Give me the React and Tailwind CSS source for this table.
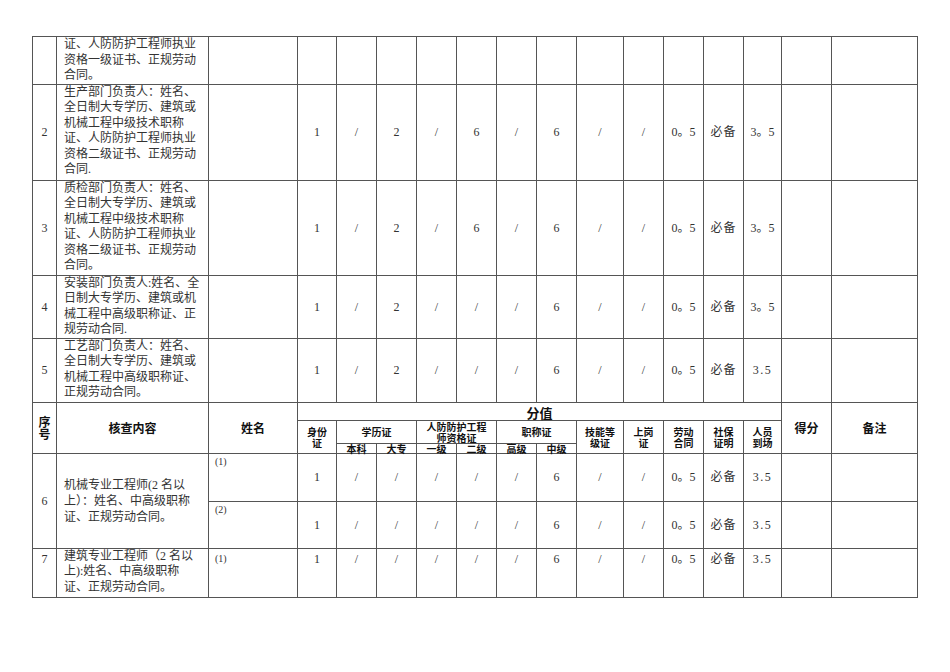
import React from "react";

const FONT = { fontFamily: '"Liberation Serif", "Noto Sans CJK SC", serif' };
const HFONT = { fontFamily: '"Noto Sans CJK SC", sans-serif' };

const rows = [
  { seq: "", lines: ["证、人防防护工程师执业", "资格一级证书、正规劳动", "合同。"], h: "h-[47px]", vals: null },
  {
    seq: "2",
    lines: ["生产部门负责人：姓名、", "全日制大专学历、建筑或", "机械工程中级技术职称", "证、人防防护工程师执业", "资格二级证书、正规劳动", "合同."],
    h: "h-[96px]",
    vals: ["1", "/", "2", "/", "6", "/", "6", "/", "/", "0。5", "必备", "3。5"],
  },
  {
    seq: "3",
    lines: ["质检部门负责人：姓名、", "全日制大专学历、建筑或", "机械工程中级技术职称", "证、人防防护工程师执业", "资格二级证书、正规劳动", "合同。"],
    h: "h-[95px]",
    vals: ["1", "/", "2", "/", "6", "/", "6", "/", "/", "0。5", "必备", "3。5"],
  },
  {
    seq: "4",
    lines: ["安装部门负责人:姓名、全", "日制大专学历、建筑或机", "械工程中高级职称证、正", "规劳动合同."],
    h: "h-[63px]",
    vals: ["1", "/", "2", "/", "/", "/", "6", "/", "/", "0。5", "必备", "3。5"],
  },
  {
    seq: "5",
    lines: ["工艺部门负责人：姓名、", "全日制大专学历、建筑或", "机械工程中高级职称证、", "正规劳动合同。"],
    h: "h-[64px]",
    vals: ["1", "/", "2", "/", "/", "/", "6", "/", "/", "0。5", "必备", "3.5"],
  },
];

const lowVals = ["1", "/", "/", "/", "/", "/", "6", "/", "/", "0。5", "必备", "3.5"];

const B = "border border-[#555] p-0";

function Val({ v, top }) {
  let extra = "";
  if (v === "3.5") extra = "tracking-[1.5px]";
  if (v === "必备") extra = "tracking-[1px]";
  return (
    <td className={`${B} text-center text-[12px] leading-[16px] text-[#333] ${top ? "align-top pt-[2px]" : "align-middle"}`}>
      <span className={extra}>{v}</span>
    </td>
  );
}

function Lines({ lines }) {
  return lines.map((l, i) => (
    <div key={i} className="whitespace-nowrap">
      {l}
    </div>
  ));
}

export default function App() {
  return (
    <div className="w-[950px] h-[672px] bg-white pt-[36px] pl-[32px]" style={FONT}>
      <table className="table-fixed border-collapse w-[885px] text-[#333]">
        <colgroup>
          <col className="w-[24px]" />
          <col className="w-[152px]" />
          <col className="w-[89px]" />
          <col className="w-[39px]" />
          <col className="w-[40px]" />
          <col className="w-[40px]" />
          <col className="w-[40px]" />
          <col className="w-[40px]" />
          <col className="w-[40px]" />
          <col className="w-[40px]" />
          <col className="w-[47px]" />
          <col className="w-[40px]" />
          <col className="w-[40px]" />
          <col className="w-[40px]" />
          <col className="w-[38px]" />
          <col className="w-[50px]" />
          <col className="w-[86px]" />
        </colgroup>
        <tbody>
          {rows.map((r, i) => (
            <tr key={i} className={r.h}>
              <td className={`${B} text-center align-middle text-[12px]`}>{r.seq}</td>
              <td className={`${B} align-top pl-[7px] text-[12px] leading-[15.5px]`}>
                <Lines lines={r.lines} />
              </td>
              <td className={B}></td>
              {r.vals
                ? r.vals.map((v, j) => <Val key={j} v={v} />)
                : Array.from({ length: 12 }).map((_, j) => <td key={j} className={B}></td>)}
              <td className={B}></td>
              <td className={B}></td>
            </tr>
          ))}

          {/* repeated header */}
          <tr className="h-[18px] font-bold text-[#111]" style={HFONT}>
            <td rowSpan={3} className={`${B} text-center align-middle text-[12px] leading-[12px]`}>
              序<br />号
            </td>
            <td rowSpan={3} className={`${B} text-center align-middle text-[12px] leading-[14px]`}>
              核查内容
            </td>
            <td rowSpan={3} className={`${B} text-center align-middle text-[12px] leading-[14px]`}>
              姓名
            </td>
            <td colSpan={12} className={`${B} text-center align-bottom text-[13px] leading-[14px]`}>
              分值
            </td>
            <td rowSpan={3} className={`${B} text-center align-middle text-[12px] leading-[14px]`}>
              得分
            </td>
            <td rowSpan={3} className={`${B} text-center align-middle text-[12px] leading-[14px]`}>
              备注
            </td>
          </tr>
          <tr className="h-[23px] font-bold text-[#111] text-[10px] leading-[11px]" style={HFONT}>
            <td rowSpan={2} className={`${B} text-center align-middle`}>
              身份<br />证
            </td>
            <td colSpan={2} className={`${B} text-center align-middle`}>
              学历证
            </td>
            <td colSpan={2} className={`${B} text-center align-middle`}>
              人防防护工程<br />师资格证
            </td>
            <td colSpan={2} className={`${B} text-center align-middle`}>
              职称证
            </td>
            <td rowSpan={2} className={`${B} text-center align-middle`}>
              技能等<br />级证
            </td>
            <td rowSpan={2} className={`${B} text-center align-middle`}>
              上岗<br />证
            </td>
            <td rowSpan={2} className={`${B} text-center align-middle`}>
              劳动<br />合同
            </td>
            <td rowSpan={2} className={`${B} text-center align-middle`}>
              社保<br />证明
            </td>
            <td rowSpan={2} className={`${B} text-center align-middle`}>
              人员<br />到场
            </td>
          </tr>
          <tr className="h-[10px] font-bold text-[#111] text-[10px] leading-[9px]" style={HFONT}>
            {["本科", "大专", "一级", "二级", "高级", "中级"].map((t) => (
              <td key={t} className={`${B} text-center align-middle`}>
                {t}
              </td>
            ))}
          </tr>

          {/* row 6 */}
          <tr className="h-[48px]">
            <td rowSpan={2} className={`${B} text-center align-middle text-[12px]`}>6</td>
            <td rowSpan={2} className={`${B} align-middle pl-[7px] text-[12px] leading-[16px]`}>
              <Lines lines={["机械专业工程师(2 名以", "上）：姓名、中高级职称", "证、正规劳动合同。"]} />
            </td>
            <td className={`${B} align-top pl-[6px] pt-[2px] text-[10px] leading-[12px]`}>(1)</td>
            {lowVals.map((v, j) => (
              <Val key={j} v={v} />
            ))}
            <td className={B}></td>
            <td className={B}></td>
          </tr>
          <tr className="h-[47px]">
            <td className={`${B} align-top pl-[6px] pt-[2px] text-[10px] leading-[12px]`}>(2)</td>
            {lowVals.map((v, j) => (
              <Val key={j} v={v} />
            ))}
            <td className={B}></td>
            <td className={B}></td>
          </tr>
          {/* row 7 */}
          <tr className="h-[49px]">
            <td className={`${B} text-center align-top pt-[2px] text-[12px] leading-[16px]`}>7</td>
            <td className={`${B} align-top pl-[7px] text-[12px] leading-[15.5px]`}>
              <Lines lines={["建筑专业工程师（2 名以", "上):姓名、中高级职称", "证、正规劳动合同。"]} />
            </td>
            <td className={`${B} align-top pl-[6px] pt-[4px] text-[10px] leading-[12px]`}>(1)</td>
            {lowVals.map((v, j) => (
              <Val key={j} v={v} top />
            ))}
            <td className={B}></td>
            <td className={B}></td>
          </tr>
        </tbody>
      </table>
    </div>
  );
}
